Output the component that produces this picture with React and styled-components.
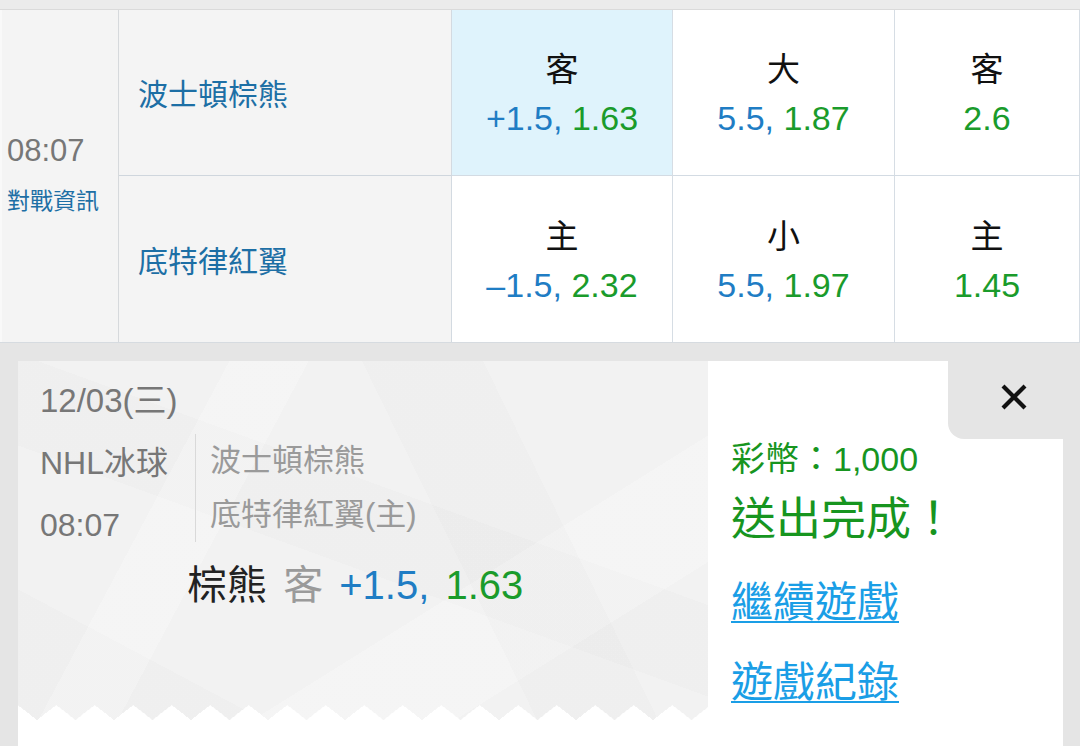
import React from 'react';
import styled, { createGlobalStyle } from 'styled-components';

const Global = createGlobalStyle`
  html, body { margin: 0; padding: 0; overflow: hidden; background: #e5e5e5; }
  body { font-family: "Liberation Sans", "Noto Sans CJK TC", sans-serif; }
  * { box-sizing: border-box; }
`;

const Page = styled.div`
  width: 1080px;
  height: 746px;
  display: flex;
  flex-direction: column;
  background: #e5e5e5;
  overflow: hidden;
`;

const TopStrip = styled.div`
  height: 10px;
  background: #ebebeb;
  border-bottom: 1px solid #dadada;
`;

const Table = styled.div`
  display: grid;
  grid-template-columns: 119px 333px 221px 222px 1fr;
  grid-template-rows: 166px 166px;
  border-bottom: 1px solid #d6dbe0;
`;

const TimeCell = styled.div`
  grid-row: 1 / span 2;
  background: #f4f4f4;
  border-left: 2px solid #f9f9f9;
  border-right: 1px solid #d6d9dc;
  display: flex;
  flex-direction: column;
  justify-content: center;
  padding-left: 5px;
`;

const Time = styled.div`
  font-size: 31px;
  line-height: 51px;
  color: #777;
`;

const InfoLink = styled.div`
  font-size: 23px;
  line-height: 51px;
  color: #1d6fa5;
`;

const TeamCell = styled.div`
  background: #f4f4f4;
  border-right: 1px solid #d3dae1;
  border-bottom: ${p => (p.$top ? '1px solid #cfd6dd' : 'none')};
  display: flex;
  align-items: center;
  padding-left: 19px;
  font-size: 30px;
  color: #1d6fa5;
`;

const OddsCell = styled.div`
  background: ${p => (p.$active ? '#dff3fc' : '#ffffff')};
  border-right: 1px solid #d6dde4;
  border-bottom: ${p => (p.$top ? '1px solid #d3dbe3' : 'none')};
  display: flex;
  flex-direction: column;
  align-items: center;
  justify-content: center;
  padding-top: 4px;
`;

const Label = styled.div`
  font-size: 33px;
  line-height: 48px;
  color: #111;
`;

const Odds = styled.div`
  font-size: 34px;
  line-height: 48px;
  white-space: nowrap;
`;

const Blue = styled.span`
  color: #1f7dc4;
`;

const Green = styled.span`
  color: #1a9b2b;
`;

const Muted = styled.span`
  color: #9a9a9a;
`;

const Dark = styled.span`
  color: #222;
`;

const Card = styled.div`
  margin: 18px 17px 0 18px;
  height: 386px;
  background: #fff;
  display: flex;
`;

const TicketPanel = styled.div`
  position: relative;
  width: 690px;
  height: 359px;
  padding: 15px 0 0 22px;
  background:
    linear-gradient(118deg, rgba(255,255,255,0) 0 24%, rgba(255,255,255,0.22) 24% 33%, rgba(255,255,255,0) 33%),
    linear-gradient(64deg, rgba(0,0,0,0) 0 60%, rgba(0,0,0,0.012) 60% 74%, rgba(0,0,0,0) 74%),
    linear-gradient(148deg, rgba(0,0,0,0) 0 64%, rgba(255,255,255,0.22) 64% 80%, rgba(0,0,0,0) 80%),
    linear-gradient(28deg, rgba(0,0,0,0.012) 0 18%, rgba(0,0,0,0) 18%),
    linear-gradient(200deg, rgba(0,0,0,0) 0 40%, rgba(0,0,0,0.01) 40% 55%, rgba(0,0,0,0) 55%),
    #f2f2f2;

  &::after {
    content: '';
    position: absolute;
    left: 0;
    right: 0;
    bottom: 0;
    height: 15px;
    background: conic-gradient(from 128deg at 50% 0, #fff 104deg, transparent 0) 19px 0 / 38.5px 15px repeat-x;
  }
`;

const DateLine = styled.div`
  font-size: 33px;
  line-height: 50px;
  color: #777;
`;

const InfoRow = styled.div`
  display: flex;
  align-items: flex-start;
  margin-top: 6px;
`;

const Meta = styled.div`
  width: 155px;
  font-size: 32px;
  line-height: 62px;
  color: #777;
`;

const Teams = styled.div`
  margin-top: 2px;
  border-left: 1px solid #d9d9d9;
  padding-left: 14px;
  font-size: 31px;
  line-height: 54px;
  color: #9a9a9a;
`;

const PickLine = styled.div`
  margin: 4px 0 0 147px;
  font-size: 40px;
  line-height: 50px;
  word-spacing: 5px;
  white-space: nowrap;
`;

const ResultPanel = styled.div`
  flex: 1;
  display: flex;
  flex-direction: column;
`;

const CloseRow = styled.div`
  display: flex;
  justify-content: flex-end;
`;

const CloseTab = styled.button`
  width: 115px;
  height: 78px;
  border: none;
  background: #e5e5e5;
  border-bottom-left-radius: 16px;
  display: flex;
  align-items: center;
  justify-content: center;
  padding: 0 0 6px 17px;
  cursor: pointer;
`;

const ResultBody = styled.div`
  padding-left: 23px;
  display: flex;
  flex-direction: column;
  align-items: flex-start;
`;

const Coins = styled.div`
  font-size: 34px;
  line-height: 40px;
  color: #17951f;
`;

const Done = styled.div`
  font-size: 45px;
  line-height: 82px;
  color: #17951f;
`;

const ActionLink = styled.a`
  display: block;
  font-size: 42px;
  line-height: ${p => p.$lh}px;
  color: #1a9ee6;
  text-decoration: underline;
  text-underline-offset: 4px;
  text-decoration-thickness: 2px;
`;

const CloseIcon = () => (
  <svg width="28" height="28" viewBox="0 0 28 28">
    <path d="M3 3 L25 25 M25 3 L3 25" stroke="#111" strokeWidth="4.2" strokeLinecap="butt" />
  </svg>
);

export default function App() {
  return (
    <>
      <Global />
      <Page>
        <TopStrip />
        <Table>
          <TimeCell>
            <Time>08:07</Time>
            <InfoLink>對戰資訊</InfoLink>
          </TimeCell>
          <TeamCell $top>波士頓棕熊</TeamCell>
          <OddsCell $top $active>
            <Label>客</Label>
            <Odds><Blue>+1.5, </Blue><Green>1.63</Green></Odds>
          </OddsCell>
          <OddsCell $top>
            <Label>大</Label>
            <Odds><Blue>5.5, </Blue><Green>1.87</Green></Odds>
          </OddsCell>
          <OddsCell $top>
            <Label>客</Label>
            <Odds><Green>2.6</Green></Odds>
          </OddsCell>
          <TeamCell>底特律紅翼</TeamCell>
          <OddsCell>
            <Label>主</Label>
            <Odds><Blue>–1.5, </Blue><Green>2.32</Green></Odds>
          </OddsCell>
          <OddsCell>
            <Label>小</Label>
            <Odds><Blue>5.5, </Blue><Green>1.97</Green></Odds>
          </OddsCell>
          <OddsCell>
            <Label>主</Label>
            <Odds><Green>1.45</Green></Odds>
          </OddsCell>
        </Table>
        <Card>
          <TicketPanel>
            <DateLine>12/03(三)</DateLine>
            <InfoRow>
              <Meta>
                <div>NHL冰球</div>
                <div>08:07</div>
              </Meta>
              <Teams>
                <div>波士頓棕熊</div>
                <div>底特律紅翼(主)</div>
              </Teams>
            </InfoRow>
            <PickLine>
              <Dark>棕熊</Dark> <Muted>客</Muted> <Blue>+1.5, </Blue><Green>1.63</Green>
            </PickLine>
          </TicketPanel>
          <ResultPanel>
            <CloseRow>
              <CloseTab aria-label="關閉"><CloseIcon /></CloseTab>
            </CloseRow>
            <ResultBody>
              <Coins>彩幣：1,000</Coins>
              <Done>送出完成！</Done>
              <ActionLink href="#" $lh={84}>繼續遊戲</ActionLink>
              <ActionLink href="#" $lh={76}>遊戲紀錄</ActionLink>
            </ResultBody>
          </ResultPanel>
        </Card>
      </Page>
    </>
  );
}
